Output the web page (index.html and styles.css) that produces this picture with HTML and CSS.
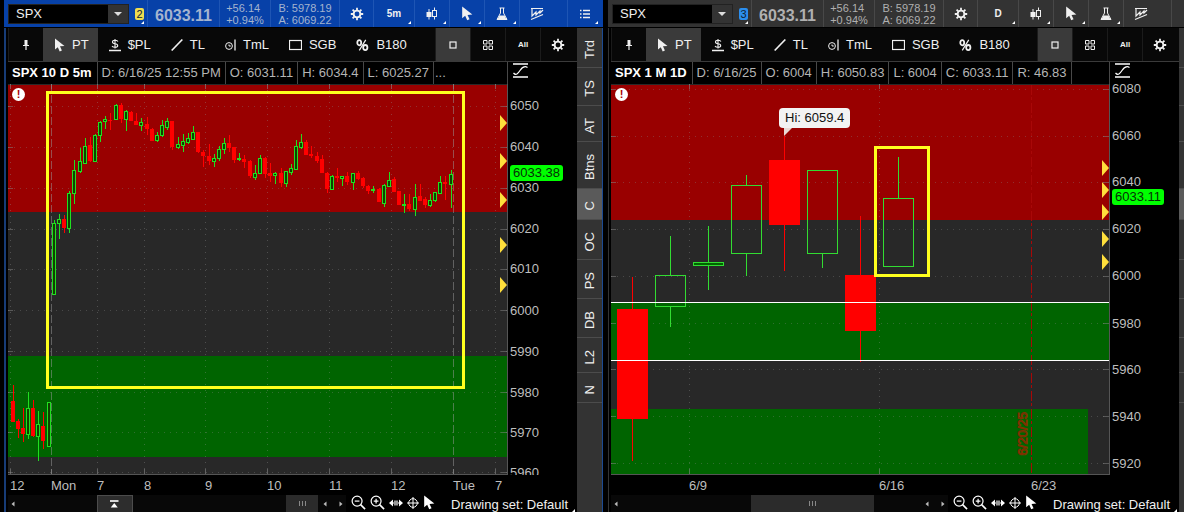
FILE: index.html
```html
<!DOCTYPE html>
<html lang="en">
<head>
<meta charset="utf-8">
<title>SPX Charts</title>
<link rel="stylesheet" href="styles.css">
</head>
<body>
<svg class="defs" aria-hidden="true">
  <symbol id="gear" viewBox="0 0 14 14"><circle cx="7" cy="7" r="3.4" fill="none" stroke="currentColor" stroke-width="1.9"/><path d="M7 .8v2.4M7 10.8v2.4M.8 7h2.4M10.8 7h2.4M2.6 2.6l1.7 1.7M9.7 9.7l1.7 1.7M2.6 11.4l1.7-1.7M9.7 4.3l1.7-1.7" stroke="currentColor" stroke-width="1.8"/></symbol>
  <symbol id="cursor" viewBox="0 0 11 14"><path d="M1 .5v11l2.8-2.3 1.9 4.2 2.2-1-1.9-4.1 4.5-.3z" fill="currentColor"/></symbol>
  <symbol id="candles" viewBox="0 0 12 14"><path d="M3 2v10.500M8.500 .5v3M8.500 9.500v3" stroke="currentColor"/><path d="M.5 5h5v5h-5z" fill="currentColor"/><rect x="6.500" y="3.500" width="4" height="6" fill="none" stroke="currentColor"/></symbol>
  <symbol id="flask" viewBox="0 0 12 14"><path d="M3.500 1h5M4.500 1v5L1 12.500h10L7.500 6V1" fill="none" stroke="currentColor"/><path d="M3.500 8.500h5l2.300 4.500H1.200z" fill="currentColor"/></symbol>
  <symbol id="pattern" viewBox="0 0 14 14"><path d="M1 1.500h12M1 12.500l12-5M2 2v7l4-4v3l4-4v2l3-3" fill="none" stroke="currentColor" stroke-width="1.200"/></symbol>
  <symbol id="list" viewBox="0 0 10 10"><path d="M3 1.500h7M3 5h7M3 8.500h7M0 1.500h1.500M0 5h1.500M0 8.500h1.500" stroke="currentColor" stroke-width="1.300"/></symbol>
  <symbol id="pin" viewBox="0 0 8 10"><path d="M2 .5h4M2.500 0h3v5h-3z" fill="currentColor"/><path d="M1 5.500h6M4 5v5" stroke="currentColor" stroke-width="1.200"/></symbol>
  <symbol id="dollar" viewBox="0 0 12 14"><path d="M9 3.500Q8 2.300 6 2.300 3.500 2.300 3.500 4 3.500 5.500 6 5.800 8.700 6.100 8.700 7.700 8.700 9.300 6 9.300 3.800 9.300 3 8M6 1v9.500" fill="none" stroke="currentColor" stroke-width="1.100"/><path d="M0 12.500h12" stroke="currentColor" stroke-width="1.500"/></symbol>
  <symbol id="line" viewBox="0 0 12 14"><path d="M.7 12.500l10.600-11" stroke="currentColor" stroke-width="1.700"/></symbol>
  <symbol id="timeline" viewBox="0 0 11 14"><circle cx="4" cy="8" r="3.400" fill="none" stroke="currentColor"/><path d="M4 6.500V8h1.800" fill="none" stroke="currentColor"/><path d="M10 1.500v11" stroke="currentColor" stroke-width="1.300"/></symbol>
  <symbol id="rect" viewBox="0 0 13 14"><rect x=".5" y="2.500" width="12" height="9" fill="none" stroke="currentColor" stroke-width="1.200"/></symbol>
  <symbol id="percent" viewBox="0 0 14 14"><ellipse cx="3.500" cy="4.500" rx="2.100" ry="2.800" fill="none" stroke="currentColor" stroke-width="1.900"/><ellipse cx="10" cy="9.800" rx="2.300" ry="2.800" fill="none" stroke="currentColor" stroke-width="1.900"/><path d="M10.500 1.500L3.500 12.800" stroke="currentColor" stroke-width="1.300"/></symbol>
  <symbol id="square" viewBox="0 0 8 8"><rect x="1" y="1" width="6" height="6" fill="none" stroke="currentColor" stroke-width="1.200"/></symbol>
  <symbol id="quad" viewBox="0 0 10 10"><path d="M.5.5h3.500v3.500h-3.500zM6 .5h3.500v3.500H6zM.5 6h3.500v3.500h-3.500zM6 6h3.500v3.500H6z" fill="none" stroke="currentColor"/></symbol>
  <symbol id="autoscale" viewBox="0 0 15 15"><path d="M0 1h15M0 14h15" stroke="currentColor" stroke-width="1.500"/><path d="M.5 10c2.500 3 4.500.5 6.500-2.500s4.500-5 7.500-3" fill="none" stroke="currentColor" stroke-width="1.200"/></symbol>
  <symbol id="zoomout" viewBox="0 0 16 16"><circle cx="6.500" cy="6.500" r="5.300" fill="none" stroke="currentColor" stroke-width="1.300"/><path d="M4 6.500h5" stroke="currentColor" stroke-width="1.300"/><path d="M10.200 10.200l4.800 4.800" stroke="currentColor" stroke-width="1.700"/></symbol>
  <symbol id="zoomin" viewBox="0 0 16 16"><circle cx="6.500" cy="6.500" r="5.300" fill="none" stroke="currentColor" stroke-width="1.300"/><path d="M4 6.500h5M6.500 4v5" stroke="currentColor" stroke-width="1.300"/><path d="M10.200 10.200l4.800 4.800" stroke="currentColor" stroke-width="1.700"/></symbol>
  <symbol id="expand" viewBox="0 0 14 10"><path d="M0 5l4-3.500v7zM14 5l-4-3.500v7z" fill="currentColor"/><path d="M2 5h3M9 5h3M6 2.500v5M8 2.500v5" stroke="currentColor" stroke-width="1.200"/></symbol>
  <symbol id="cross" viewBox="0 0 12 12"><circle cx="6" cy="6" r="4.300" fill="none" stroke="currentColor"/><path d="M6 0v12M0 6h12" stroke="currentColor"/></symbol>
  <symbol id="totop" viewBox="0 0 9 8"><path d="M0 1h8.500" stroke="currentColor" stroke-width="1.600"/><path d="M4.250 3l3.500 4.500h-7z" fill="currentColor"/></symbol>
  <symbol id="arrow" viewBox="0 0 4 6"><path d="M3.500.5v5L.5 3z" fill="currentColor"/></symbol>
</svg>
<main class="workspace" id="workspace"></main>
<script src="charts.js"></script>
</body>
</html>
```
FILE: styles.css
```css
* { box-sizing: border-box; }
body {
  margin: 0;
  background: #000;
  color: #f0f0f0;
  font-family: "Liberation Sans", Arial, sans-serif;
  font-size: 13px;
  line-height: 16px;
  overflow: hidden;
}
button, input { font: inherit; color: inherit; border: 0; padding: 0; background: none; border-radius: 0; }
svg { display: block; flex: none; }
.defs { display: none; }

.workspace { display: grid; grid-template-columns: 604fr 580fr; height: 100vh; }
.panel { display: flex; flex-direction: column; min-width: 0; overflow: hidden; padding-left: 4px; }
.panel-active { padding-right: 1px; }

/* Symbol header */
.header { display: flex; flex: none; height: 27px; margin-bottom: 1px; overflow: hidden; background: #333; --rule: #484848; --dim: #b0b0b0; }
.panel-active .header { background: #0741a8; --rule: #1e55b4; --dim: #a4b4cf; }
.symbol-cell { display: flex; flex: none; align-items: center; gap: 6px; width: 143px; padding: 1px 0 0 4px; }
.combo { display: flex; width: 121px; height: 20px; background: #000; border: 1px solid #222; }
.combo input { flex: 1; min-width: 0; padding-left: 7px; }
.combo button { width: 20px; background: #333; display: grid; place-items: center; }
.combo button::before { content: ""; border: 4px solid transparent; border-top-color: #ddd; border-bottom: 0; }
.link-badge { position: relative; align-self: flex-start; margin-top: 7px; width: 9px; height: 12px; border-radius: 2px; background: #2b8eee; color: #123; font-size: 11px; line-height: 12px; text-align: center; }
.panel-active .link-badge { background: #eedc50; }
.link-badge::after, .corner::after { content: ""; position: absolute; right: 3px; bottom: 3px; border: 3px solid transparent; border-right: 0; border-top: 0; border-bottom: 3px solid #fff; border-left: 3px solid transparent; }
.link-badge::after { right: 0; bottom: -4px; }
.cell { position: relative; display: flex; flex: none; align-items: center; justify-content: center; border-left: 1px solid var(--rule); }
.last { width: 72px; font-size: 16px; font-weight: 700; color: var(--dim); padding-top: 4px; }
.change, .quote { font-size: 11px; line-height: 12px; color: var(--dim); }
.change { width: 51px; }
.quote { width: 69px; }
.w34 { width: 34px; }
.w35 { width: 35px; }
.w41 { width: 41px; font-size: 10px; font-weight: 700; }
.w48 { width: 48px; justify-content: flex-start; padding-left: 10px; }

/* Panel body */
.body { display: flex; flex: 1; min-height: 0; padding-left: 2px; border-left: 1px solid #333; }
.panel-active .body { border-left: 2px solid #173c77; border-right: 1px solid #1c4a92; }
.chart { display: flex; flex: 1; flex-direction: column; min-width: 0; }
.tabs { display: flex; flex-direction: column; flex: none; width: 25px; background: #333; overflow: hidden; }
.panel-idle .tabs { width: 5px; }
.tab { display: flex; flex: none; align-items: center; justify-content: center; padding: 12px 0 8px; width: 25px; border-bottom: 1px solid #4c4c4c; }
.tab span { writing-mode: vertical-rl; transform: rotate(180deg); }
.tab-on { background: #5a5a5a; }

.toolbar { display: flex; flex: none; height: 34px; padding-right: 2px; background: #080808; border-bottom: 1px solid #3a3a3a; }
.tool { display: flex; align-items: center; gap: 7px; padding: 0 9px 0 11px; }
.tool-on { background: #3a3a3a; }
.tool-small { width: 35px; justify-content: center; padding: 0; border-left: 1px solid #1b1b1b; font-size: 8px; font-weight: 700; }
.push { margin-left: auto; }

.info { display: flex; flex: none; height: 22px; color: #b4b4b4; overflow: hidden; }
.info-cells { display: flex; flex: 1; min-width: 0; overflow: hidden; }
.info-cell { flex: none; padding: 3px 4px 0 4px; border-right: 1px solid #484848; }
.info-title { color: #fff; font-weight: 700; padding-right: 5px; }
.info-more { border-right: 0; padding-left: 1px; }
.info-scale { width: 70px; flex: none; padding: 1px 0 0 5px; border-left: 1px solid #484848; color: #fff; }

.plot-row { display: grid; flex: 1; grid-template-columns: minmax(0, 1fr) 69px; min-height: 0; }
.plot { position: relative; min-height: 0; min-width: 0; background: #282828; border: 1px solid #555; border-width: 0 1px 1px 0; }
.plot > svg { position: absolute; inset: 0; width: 100%; height: 100%; }
.alert { position: absolute; left: 4px; top: 4px; width: 13px; height: 13px; border-radius: 50%; background: #fff; color: #a00; font-weight: 700; font-size: 11px; line-height: 13px; text-align: center; }
.callout { position: absolute; height: 20px; padding: 2px 6px; border-radius: 4px; background: #f3f3f3; color: #111; white-space: nowrap; }
.callout::after { content: ""; position: absolute; left: 5px; top: 20px; border-top: 8px solid #e9d9d4; border-right: 8px solid transparent; }
.expiry { position: absolute; writing-mode: vertical-rl; transform: rotate(180deg); color: transparent; -webkit-text-stroke: 1px #803000; }
.price-axis { position: relative; overflow: hidden; color: #bebebe; }
.price { position: absolute; left: 2px; transform: translateY(-50%); }
.price-tag { position: absolute; left: 2px; height: 16px; padding: 0 3px; border-radius: 3px; transform: translateY(-50%); background: #00ff00; color: #063006; }
.time-axis { position: relative; flex: none; height: 20px; color: #bebebe; }
.time { position: absolute; top: 3px; }

.footer { display: flex; flex: none; height: 17px; }
.track { display: flex; flex: 1; align-items: center; background: #080808; color: #bbb; padding: 0 3px; }
.thumb { flex: none; align-self: stretch; display: flex; align-items: center; justify-content: center; gap: 2px; background: #2b2b2b; }
.thumb i { width: 1px; height: 5px; background: #888; }
.to-top { flex: none; align-self: stretch; width: 36px; display: grid; place-items: center; background: #2d2d2d; border: 1px solid #4c4c4c; border-bottom: 0; color: #fff; }
.flip { transform: scaleX(-1); margin-left: 12px; }
.chart-tools { display: flex; align-items: center; gap: 4px; padding: 0 16px 2px 5px; color: #fff; }
.drawing-set { position: relative; width: 126px; white-space: nowrap; text-align: left; padding-top: 2px; }
.drawing-set::after { right: 2px; bottom: 0; }
```
FILE: charts.js
```javascript
// Candles: [centre x, high, body top, body bottom, low, up?] in plot units.
const intraday = [
  [13,385,401,422,422,0],[18,419,421,429,438,0],[23,408,428,434,442,0],[28,392,408,434,439,1],[33,400,408,436,437,0],[38,411,424,436,461,1],[43,412,426,441,449,0],[49,402,402,446,447,1],
  [54,220,223,294,294,1],[59,214,219,223,239,1],[64,215,219,228,233,0],[69,191,193,228,233,1],[74,160,170,193,204,1],[80,148,161,171,173,1],[85,138,146,163,163,1],[90,137,145,161,162,0],
  [95,134,135,161,162,1],[100,121,122,135,142,1],[105,116,119,121,129,1],[110,113,120,121,130,0],[116,104,105,119,120,1],[121,103,105,119,123,0],[126,110,111,119,131,1],[131,111,112,121,121,0],
  [136,113,121,125,125,0],[141,118,122,125,131,1],[147,117,124,129,135,0],[152,128,129,141,141,0],[157,132,135,140,142,1],[162,120,125,135,137,1],[167,118,121,127,130,1],[172,121,121,147,150,0],
  [178,137,144,147,149,1],[183,134,141,145,152,1],[188,133,138,142,144,1],[193,126,132,139,140,1],[198,132,132,152,153,0],[203,150,152,156,167,0],[209,144,156,161,165,0],[214,154,158,161,167,1],
  [219,146,149,158,161,1],[224,138,143,149,154,1],[229,135,143,148,152,0],[234,147,147,160,163,0],[239,153,158,159,161,1],[244,155,159,162,168,0],[250,160,161,176,178,0],[255,165,173,177,180,1],
  [260,155,158,173,174,1],[265,157,158,174,178,0],[270,163,173,176,182,0],[275,172,173,175,184,1],[281,168,173,183,187,0],[286,171,171,183,187,1],[291,164,168,172,175,1],[296,140,146,169,170,1],
  [301,134,142,147,149,1],[306,140,142,155,155,0],[311,146,154,156,158,0],[317,152,156,161,163,0],[322,155,159,173,173,0],[327,172,173,189,193,0],[332,175,176,189,190,1],[337,168,176,178,182,0],
  [342,176,176,178,186,1],[347,172,176,182,185,0],[353,173,173,182,190,1],[358,171,173,179,180,0],[363,177,178,186,188,0],[368,185,186,191,194,0],[373,186,189,190,193,1],[379,188,189,202,202,0],
  [384,184,185,203,207,1],[389,172,180,186,186,1],[394,177,179,192,192,0],[399,191,191,205,205,0],[404,194,204,205,213,1],[409,194,204,209,211,0],[415,184,197,209,216,1],[420,184,196,201,201,0],
  [425,197,199,205,208,0],[430,194,200,205,207,1],[435,192,192,200,202,1],[440,176,182,193,193,1],[445,176,182,184,200,0],[451,170,174,184,208,1]
];
const daily = [
  [632,277,309,419,461,0],[670,236,275,306,327,1],[708,226,262,265,290,1],[746,175,185,253,276,1],[784,136,160,225,271,0],[822,170,170,253,268,1],[860,216,275,331,362,0],[898,157,198,266,266,1]
];

const panels = [
  {
    active: true, link: 2, period: '5m', title: 'SPX 10 D 5m',
    info: ['D: 6/16/25 12:55 PM', 'O: 6031.11', 'H: 6034.4', 'L: 6025.27'], more: true,
    x0: 8, width: 499, candles: intraday,
    zones: [['#990000', 8, 85, 500, 127], ['#006400', 8, 356, 500, 101]],
    prices: [[6050,106],[6040,147],[6030,188],[6020,229],[6010,269],[6000,310],[5990,351],[5980,392],[5970,432],[5960,472]],
    times: [['12',10],['Mon',51],['7',97],['8',144],['9',205],['10',267],['11',329],['12',391],['Tue',453],['7',495]],
    sessions: [51, 453], levels: [], box: [47.5, 92.5, 416, 295], marks: [123,161,200,245,285],
    tag: ['6033.38', 173], before: 268, thumb: 32, after: 5, top: true
  },
  {
    active: false, link: 3, period: 'D', title: 'SPX 1 M 1D', wide: true,
    info: ['D: 6/16/25', 'O: 6004', 'H: 6050.83', 'L: 6004', 'C: 6033.11', 'R: 46.83'],
    x0: 611, width: 498, candles: daily,
    zones: [['#990000', 611, 85, 499, 135], ['#006400', 611, 302, 499, 58], ['#006400', 611, 409, 477, 66]],
    prices: [[6080,89],[6060,136],[6040,182],[6020,229],[6000,276],[5980,323],[5960,369],[5940,416],[5920,463]],
    times: [['6/9',689],['6/16',879],['6/23',1031]],
    sessions: [], levels: [302, 360], box: [875.5, 147.5, 53, 128], marks: [168,190,212,239,262],
    tag: ['6033.11', 197], before: 129, thumb: 123, after: 50, callout: ['Hi: 6059.4', 779, 108], expiry: ['6/20/25', 1015, 412, 1031]
  }
];

const TOP = 84, HEIGHT = 390;
const icon = (id, w, h, cls = '') => `<svg class="${cls}" width="${w}" height="${h}" aria-hidden="true"><use href="#${id}"/></svg>`;
const left = (p, x) => `left:${(x - p.x0) / p.width * 100}%`;
const top_ = y => `top:${(y - TOP) / HEIGHT * 100}%`;

function drawCandle(p, [x, hi, t, b, lo, up]) {
  const color = !up ? '#ff0000' : p.wide ? '#32dc32' : '#20e020';
  const h = Math.max(1, b - t);
  const wick = `<path d="M${x}.5 ${hi}V${t}M${x}.5 ${b}V${lo}" stroke="${color}"/>`;
  const x1 = p.wide ? x - 15 : x - 2;
  const w = p.wide ? 31 : 4;
  if (!up) return `${wick}<rect x="${x1}" y="${t}" width="${w}" height="${h}" fill="${color}"/>`;
  const fill = !p.wide ? '#104000' : h < 5 ? '#006400' : 'none';
  return `${wick}<rect x="${x1 + .5}" y="${t}.5" width="${w - 1}" height="${h}" fill="${fill}" stroke="${color}"/>`;
}

// Dash-dot vertical line built from separate bars.
function dashDot(x, from, to, color) {
  let bars = '';
  for (let y = from; y < to; y += 18) {
    bars += `<rect x="${x}" y="${y}" width="1" height="${Math.min(10, to - y)}" fill="${color}"/>`;
    if (y + 12 < to) bars += `<rect x="${x}" y="${y + 12}" width="1" height="${Math.min(3, to - y - 12)}" fill="${color}"/>`;
  }
  return bars;
}

function drawPlot(p) {
  const end = p.x0 + p.width;
  let s = '';
  for (const [fill, x, y, w, h] of p.zones) s += `<rect x="${x}" y="${y}" width="${w}" height="${h}" fill="${fill}"/>`;
  for (const [, y] of p.prices) s += `<path d="M${p.x0} ${y}.5H${end}" stroke="#888" stroke-opacity=".35" stroke-dasharray="1 5"/><path d="M${p.x0} ${y}.5h5M${end - 6} ${y}.5h6" stroke="#888" stroke-opacity=".5"/>`;
  for (const [, x] of p.times) {
    if (p.expiry && x === p.expiry[3]) continue;
    const day = p.sessions.includes(x);
    s += `<path d="M${x}.5 ${TOP}V475" stroke="#999" stroke-opacity="${day ? .5 : .35}" stroke-dasharray="${day ? '8 3' : '1 5'}"/><path d="M${x}.5 ${TOP}v5M${x}.5 469v5" stroke="#888" stroke-opacity=".6"/>`;
  }
  if (p.expiry) s += dashDot(p.expiry[3], 85, 474, '#a80808');
  for (const c of p.candles) s += drawCandle(p, c);
  for (const y of p.levels) s += `<path d="M${p.x0} ${y}.5H${end}" stroke="#fff"/>`;
  const [bx, by, bw, bh] = p.box;
  s += `<rect x="${bx}" y="${by}" width="${bw}" height="${bh}" fill="none" stroke="#ffff1e" stroke-width="3"/>`;
  for (const y of p.marks) s += `<path d="M${end - 7} ${y - 8}L${end} ${y}L${end - 7} ${y + 8}z" fill="#ffdf3c"/>`;
  return `<svg viewBox="${p.x0} ${TOP} ${p.width} ${HEIGHT}" preserveAspectRatio="none" role="img" aria-label="${p.title} candles">${s}</svg>`;
}

function header(p) {
  const cell = (id, w, h, cls, name) => `<button class="cell ${cls}" aria-label="${name}">${icon(id, w, h)}</button>`;
  return `<header class="header">
    <div class="symbol-cell"><div class="combo"><input type="text" value="SPX" aria-label="Symbol"><button aria-label="Symbol list"></button></div><span class="link-badge">${p.link}</span></div>
    <div class="cell last">6033.11</div>
    <div class="cell change">+56.14<br>+0.94%</div>
    <div class="cell quote">B: 5978.19<br>A: 6069.22</div>
    ${cell('gear', 14, 14, 'w34', 'Settings')}
    <button class="cell w41 corner">${p.period}</button>
    ${cell('candles', 12, 14, 'w35 corner', 'Chart style')}${cell('cursor', 12, 15, 'w35 corner', 'Pointer')}${cell('flask', 12, 14, 'w35 corner', 'Studies')}${cell('pattern', 14, 14, 'w48', 'Patterns')}${cell('list', 10, 10, 'w34 corner', 'Menu')}
  </header>`;
}

function toolbar() {
  const tools = [['cursor',11,'PT'],['dollar',12,'$PL'],['line',12,'TL'],['timeline',11,'TmL'],['rect',13,'SGB'],['percent',13,'B180']];
  return `<div class="toolbar"><button class="tool tool-small" aria-label="Pin">${icon('pin', 8, 10)}</button>
    ${tools.map(([id, w, name], i) => `<button class="tool ${i ? '' : 'tool-on'}">${icon(id, w, 14)}${name}</button>`).join('')}
    <button class="tool tool-small tool-on push" aria-label="Single">${icon('square', 8, 8)}</button>
    <button class="tool tool-small" aria-label="Grid">${icon('quad', 10, 10)}</button>
    <button class="tool tool-small">All</button>
    <button class="tool tool-small" aria-label="Toolbar settings">${icon('gear', 14, 14)}</button></div>`;
}

function footer(p) {
  const track = p.top
    ? `<span style="flex:82"></span><button class="to-top" aria-label="Expand">${icon('totop', 9, 8)}</button><span style="flex:154"></span>`
    : `<span style="flex:${p.before}"></span>`;
  return `<div class="footer"><div class="track">${icon('arrow', 4, 6)}${track}
    <div class="thumb" style="width:${p.thumb}px"><i></i><i></i><i></i></div><span style="flex:${p.after}"></span>${icon('arrow', 4, 6)}${icon('arrow', 4, 6, 'flip')}</div>
    <div class="chart-tools">${icon('zoomout', 15, 15)}${icon('zoomin', 15, 15)}${icon('expand', 14, 10)}${icon('cross', 12, 12)}${icon('cursor', 12, 15)}</div>
    <button class="drawing-set corner">Drawing set: Default</button></div>`;
}

document.getElementById('workspace').innerHTML = panels.map(p => `
  <section class="panel ${p.active ? 'panel-active' : 'panel-idle'}">${header(p)}
    <div class="body"><div class="chart">${toolbar()}
      <div class="info"><div class="info-cells"><span class="info-cell info-title">${p.title}</span>${p.info.map(t => `<span class="info-cell">${t}</span>`).join('')}${p.more ? '<span class="info-cell info-more">...</span>' : ''}</div><div class="info-scale">${icon('autoscale', 15, 15)}</div></div>
      <div class="plot-row"><div class="plot">${drawPlot(p)}<span class="alert">!</span>
        ${p.callout ? `<span class="callout" style="${left(p, p.callout[1])};${top_(p.callout[2])}">${p.callout[0]}</span>` : ''}
        ${p.expiry ? `<span class="expiry" style="${left(p, p.expiry[1])};${top_(p.expiry[2])}">${p.expiry[0]}</span>` : ''}</div>
        <div class="price-axis">${p.prices.map(([v, y]) => `<span class="price" style="${top_(y)}">${v}</span>`).join('')}<span class="price-tag" style="${top_(p.tag[1])}">${p.tag[0]}</span></div></div>
      <div class="time-axis">${p.times.map(([t, x]) => `<span class="time" style="left:${(x - p.x0) / (p.width + 70) * 100}%">${t}</span>`).join('')}</div>
      ${footer(p)}</div>
      <nav class="tabs">${['Trd','TS','AT','Btns','C','OC','PS','DB','L2','N'].map(t => `<button class="tab ${t === 'C' ? 'tab-on' : ''}"><span>${t}</span></button>`).join('')}</nav></div>
  </section>`).join('');
```
